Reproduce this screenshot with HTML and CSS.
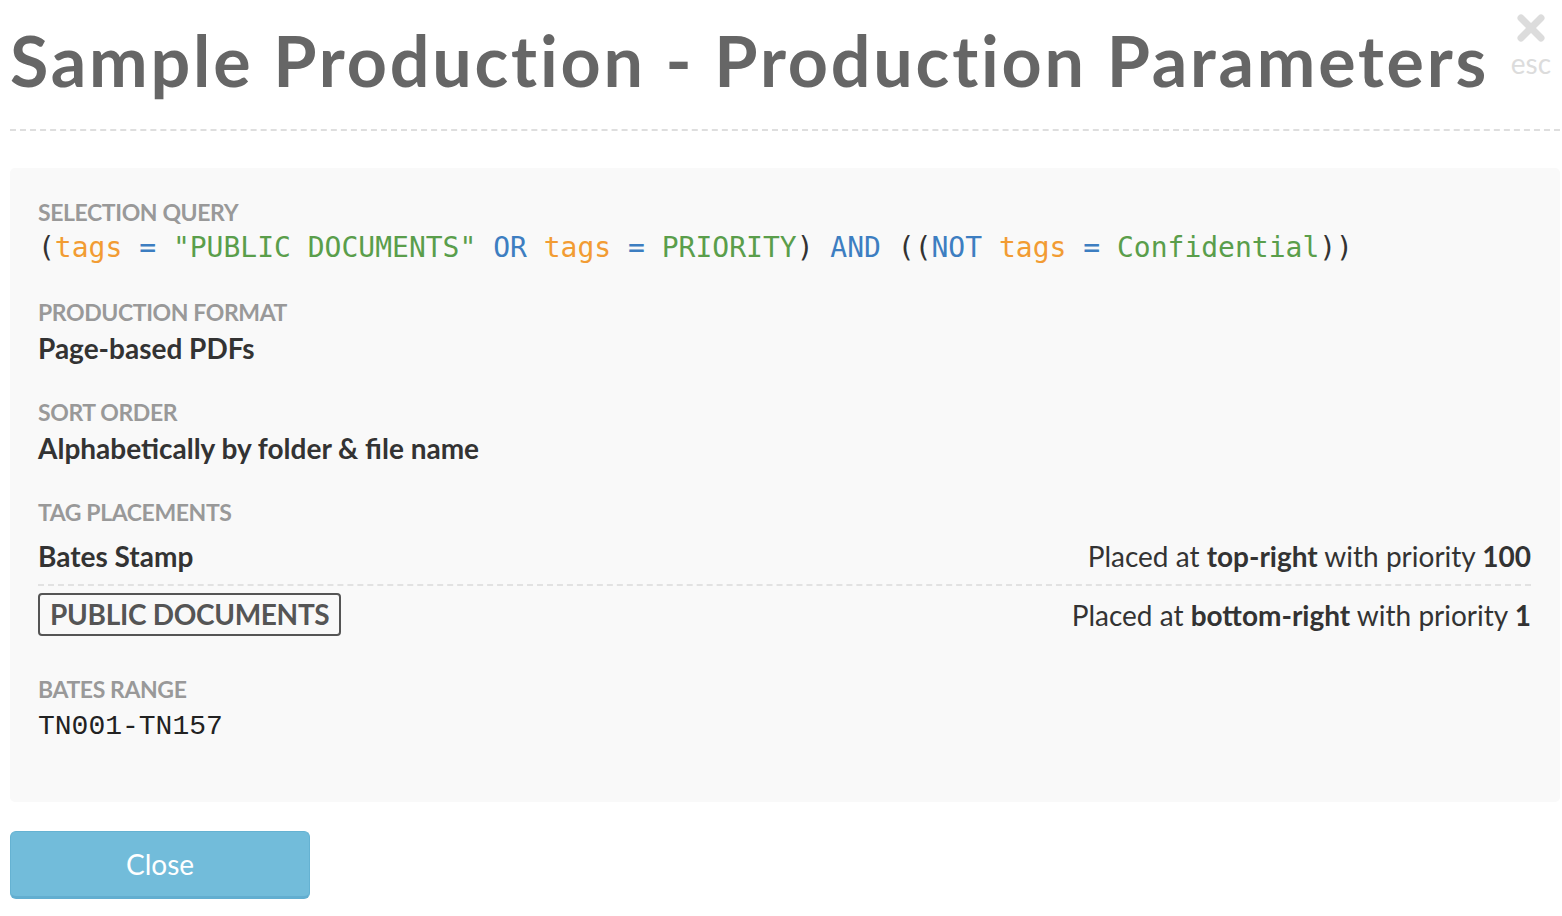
FILE: index.html
```html
<!DOCTYPE html>
<html lang="en">
<head>
  <meta charset="UTF-8">
  <meta name="viewport" content="width=device-width, initial-scale=1.0">
  <title>Sample Production - Production Parameters</title>
  <link rel="stylesheet" href="styles.css">
</head>
<body>
  <div class="modal">
    <!-- Header -->
    <div class="modal-header">
      <h1>Sample Production - Production Parameters</h1>
      <a class="close-x" href="#">
        <svg width="28" height="28" viewBox="0 0 28 28">
          <path d="M4 4 L24 24 M24 4 L4 24" stroke="#dcdcdc" stroke-width="7" stroke-linecap="round"/>
        </svg>
        <span>esc</span>
      </a>
    </div>

    <!-- Parameters -->
    <div class="params">
      <div class="param">
        <div class="param-label">Selection Query</div>
        <div class="query"><span class="q-paren">(</span><span class="q-field">tags</span> <span class="q-op">=</span> <span class="q-val">"PUBLIC DOCUMENTS"</span> <span class="q-op">OR</span> <span class="q-field">tags</span> <span class="q-op">=</span> <span class="q-val">PRIORITY</span><span class="q-paren">)</span> <span class="q-op">AND</span> <span class="q-paren">((</span><span class="q-op">NOT</span> <span class="q-field">tags</span> <span class="q-op">=</span> <span class="q-val">Confidential</span><span class="q-paren">))</span></div>
      </div>

      <div class="param">
        <div class="param-label">Production Format</div>
        <div class="param-value">Page-based PDFs</div>
      </div>

      <div class="param">
        <div class="param-label">Sort Order</div>
        <div class="param-value">Alphabetically by folder &amp; file name</div>
      </div>

      <div class="param">
        <div class="param-label">Tag Placements</div>
        <div class="placements">
          <div class="placement">
            <div class="placement-name">Bates Stamp</div>
            <div class="placement-info">Placed at <b>top-right</b> with priority <b>100</b></div>
          </div>
          <div class="placement">
            <div class="tag">PUBLIC DOCUMENTS</div>
            <div class="placement-info">Placed at <b>bottom-right</b> with priority <b>1</b></div>
          </div>
        </div>
      </div>

      <div class="param">
        <div class="param-label">Bates Range</div>
        <div class="bates">TN001-TN157</div>
      </div>
    </div>

    <button class="btn-close">Close</button>
  </div>
</body>
</html>
```

FILE: styles.css
```css
body {
  margin: 0;
  font-family: Lato, "Open Sans", sans-serif;
  background: #fff;
  color: #333;
}
.modal {
  padding: 0 2px 0 10px;
}
.modal-header {
  display: flex;
  justify-content: space-between;
  align-items: flex-start;
  height: 129px;
  border-bottom: 2px dashed #dedede;
}
h1 {
  margin: 18px 0 0;
  font-family: Lato, sans-serif;
  font-weight: 700;
  font-size: 70px;
  line-height: 84px;
  letter-spacing: 2.8px;
  font-variant-ligatures: none;
  color: #666;
  white-space: nowrap;
}
.close-x {
  display: flex;
  flex-direction: column;
  align-items: center;
  margin: 14px 9px 0 0;
  text-decoration: none;
  color: #dcdcdc;
  font-size: 28px;
  line-height: 26px;
}
.close-x span {
  margin-top: 8px;
}
.params {
  margin-top: 37px;
  background: #f9f9f9;
  border-radius: 5px;
  padding: 28px 29px 53px 28px;
}
.param {
  margin-bottom: 28px;
}
.param:last-child {
  margin-bottom: 0;
}
.param-label {
  text-transform: uppercase;
  font-weight: 700;
  font-size: 23px;
  line-height: 32px;
  letter-spacing: -0.4px;
  color: #999;
}
.param-value {
  font-weight: 700;
  font-size: 28px;
  line-height: 40px;
  color: #333;
}
.query {
  font-family: "DejaVu Sans Mono", monospace;
  font-size: 28px;
  line-height: 40px;
  white-space: nowrap;
}
.q-paren { color: #333; }
.q-field { color: #f29c33; }
.q-op { color: #3d7ec1; }
.q-val { color: #5a9e4b; }
.placements {
  margin-top: 10px;
}
.placement {
  display: flex;
  justify-content: space-between;
  align-items: center;
  padding-bottom: 10px;
}
.placement + .placement {
  border-top: 2px dashed #e2e2e2;
  padding-top: 7px;
  padding-bottom: 9px;
}
.placement-name {
  font-weight: 700;
  font-size: 28px;
  line-height: 36px;
}
.placement-info {
  font-size: 28px;
  line-height: 36px;
}
.placement-info b {
  font-weight: 700;
}
.tag {
  border: 2px solid #555;
  border-radius: 4px;
  padding: 2px 10px;
  font-weight: 700;
  font-size: 28px;
  line-height: 35px;
  color: #555;
  letter-spacing: -0.3px;
}
.bates {
  font-family: "Nimbus Mono PS", "Courier New", "FreeMono", "Liberation Mono", monospace;
  font-size: 28px;
  line-height: 44px;
  color: #222;
}
.btn-close {
  display: block;
  margin-top: 29px;
  width: 300px;
  height: 68px;
  background: #72bcda;
  border: 1px solid #65b2d2;
  border-bottom: 3px solid #62aed0;
  border-radius: 6px;
  color: #fff;
  font-family: Lato, sans-serif;
  font-size: 28px;
  cursor: pointer;
}
```
